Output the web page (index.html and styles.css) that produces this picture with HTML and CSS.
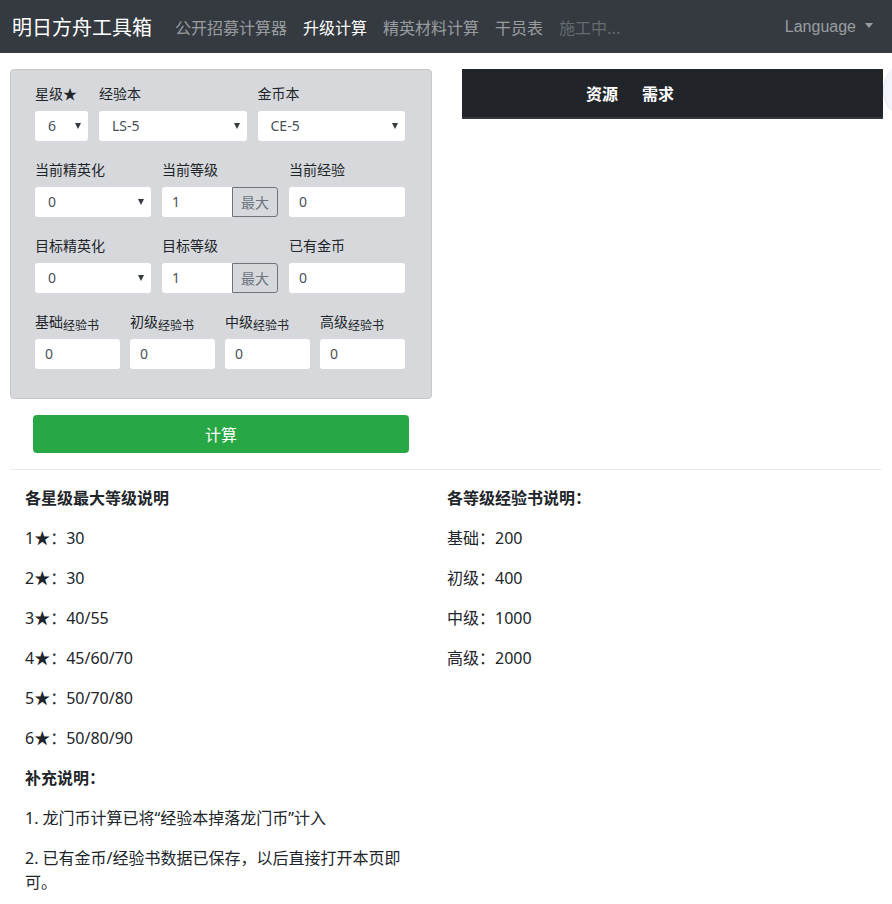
FILE: index.html
```html
<!DOCTYPE html>
<html lang="zh-CN">
<head>
<meta charset="utf-8">
<title>明日方舟工具箱 - 升级计算</title>
<link rel="stylesheet" href="styles.css">
</head>
<body>
<nav class="navbar">
  <a class="brand" href="#">明日方舟工具箱</a>
  <ul class="nav">
    <li><a class="nav-link" href="#">公开招募计算器</a></li>
    <li><a class="nav-link active" href="#">升级计算</a></li>
    <li><a class="nav-link" href="#">精英材料计算</a></li>
    <li><a class="nav-link" href="#">干员表</a></li>
    <li><a class="nav-link disabled" href="#">施工中...</a></li>
  </ul>
  <a class="nav-link lang" href="#">Language<span class="caret"></span></a>
</nav>

<main class="main">
  <div class="top">
    <div class="left">
      <form class="card">
        <div class="frow r1">
          <div class="fg"><label class="lbl">星级★</label><div class="sel"><span>6</span></div></div>
          <div class="fg"><label class="lbl">经验本</label><div class="sel"><span>LS-5</span></div></div>
          <div class="fg"><label class="lbl">金币本</label><div class="sel"><span>CE-5</span></div></div>
        </div>
        <div class="frow r3">
          <div class="fg"><label class="lbl">当前精英化</label><div class="sel"><span>0</span></div></div>
          <div class="fg"><label class="lbl">当前等级</label><div class="igroup"><div class="inp">1</div><button type="button" class="maxbtn">最大</button></div></div>
          <div class="fg"><label class="lbl">当前经验</label><div class="inp">0</div></div>
        </div>
        <div class="frow r3">
          <div class="fg"><label class="lbl">目标精英化</label><div class="sel"><span>0</span></div></div>
          <div class="fg"><label class="lbl">目标等级</label><div class="igroup"><div class="inp">1</div><button type="button" class="maxbtn">最大</button></div></div>
          <div class="fg"><label class="lbl">已有金币</label><div class="inp">0</div></div>
        </div>
        <div class="frow r4">
          <div class="fg"><label class="lbl">基础<small>经验书</small></label><div class="inp">0</div></div>
          <div class="fg"><label class="lbl">初级<small>经验书</small></label><div class="inp">0</div></div>
          <div class="fg"><label class="lbl">中级<small>经验书</small></label><div class="inp">0</div></div>
          <div class="fg"><label class="lbl">高级<small>经验书</small></label><div class="inp">0</div></div>
        </div>
      </form>
      <button type="button" class="calc">计算</button>
    </div>
    <div class="right">
      <table class="res">
        <thead><tr><th class="c1">资源</th><th>需求</th></tr></thead>
      </table>
    </div>
  </div>

  <hr class="sep">

  <div class="notes">
    <div class="ncol left-notes">
      <p class="h">各星级最大等级说明</p>
      <p>1★：30</p>
      <p>2★：30</p>
      <p>3★：40/55</p>
      <p>4★：45/60/70</p>
      <p>5★：50/70/80</p>
      <p>6★：50/80/90</p>
      <p class="h">补充说明：</p>
      <p>1. 龙门币计算已将“经验本掉落龙门币”计入</p>
      <p>2. 已有金币/经验书数据已保存，以后直接打开本页即可。</p>
    </div>
    <div class="ncol right-notes">
      <p class="h">各等级经验书说明：</p>
      <p>基础：200</p>
      <p>初级：400</p>
      <p>中级：1000</p>
      <p>高级：2000</p>
    </div>
  </div>
</main>

<div class="float-wrap"><div class="float-circle"></div></div>
</body>
</html>
```

FILE: styles.css
```css
html, body {
  overflow-x: hidden;
}
body {
  margin: 0;
  font-family: "Noto Sans", "Noto Sans CJK SC", sans-serif;
  font-size: 16px;
  line-height: 24px;
  color: #212529;
  background: #fff;
}

/* navbar */
.navbar {
  height: 53px;
  background: #343a40;
  display: flex;
  align-items: center;
  padding: 0 19px 0 12px;
  box-sizing: border-box;
}
.brand {
  color: #fff;
  text-decoration: none;
  font-size: 20px;
  line-height: 30px;
  margin-right: 15px;
  font-family: "Noto Sans CJK SC", sans-serif;
}
.nav {
  list-style: none;
  margin: 0;
  padding: 0;
  display: flex;
}
.nav-link {
  display: block;
  padding: 0 8px;
  color: rgba(255, 255, 255, 0.5);
  text-decoration: none;
  font-size: 16px;
  line-height: 24px;
  font-family: "Noto Sans CJK SC", sans-serif;
}
.nav-link.active { color: #fff; }
.nav-link.disabled { color: rgba(255, 255, 255, 0.25); }
.lang {
  margin-left: auto;
  padding: 0;
  font-family: "Liberation Sans", "Noto Sans", sans-serif;
}
.caret {
  display: inline-block;
  margin-left: 9px;
  vertical-align: 4px;
  border-top: 5px solid rgba(255, 255, 255, 0.5);
  border-left: 4px solid transparent;
  border-right: 4px solid transparent;
}

/* main */
.main {
  padding: 0 10px;
}
.top {
  display: flex;
  gap: 30px;
  margin-top: 16px;
}
.left {
  width: 422px;
  flex: none;
}
.right {
  width: 421px;
  flex: none;
}

/* card form */
.card {
  margin: 0;
  background: #d6d8db;
  border: 1px solid #c6c8ca;
  border-radius: 4px;
  padding: 13px 26px 29px 24px;
}
.frow {
  display: grid;
  gap: 11px;
  margin-bottom: 18px;
}
.frow:last-child { margin-bottom: 0; }
.r1 { grid-template-columns: 53px 1fr 1fr; }
.r3 { grid-template-columns: 1fr 1fr 1fr; }
.r4 { grid-template-columns: 1fr 1fr 1fr 1fr; gap: 11px 10px; }
.fg { min-width: 0; }
.lbl {
  display: block;
  height: 20px;
  font-family: "Noto Sans CJK SC", sans-serif;
  font-size: 14px;
  line-height: 20px;
  margin-bottom: 8px;
  color: #212529;
  white-space: nowrap;
}
.lbl small {
  font-size: 12px;
  line-height: 0;
  position: relative;
  top: 3px;
}
.sel, .inp {
  height: 30px;
  box-sizing: border-box;
  background: #fff;
  border-radius: 3px;
  font-size: 14px;
  line-height: 30px;
  color: #495057;
  font-family: "Noto Sans", sans-serif;
}
.sel {
  position: relative;
  padding-left: 13px;
}
.sel::after {
  content: "";
  position: absolute;
  right: 7px;
  top: 12px;
  border-top: 6px solid #343a40;
  border-left: 3px solid transparent;
  border-right: 3px solid transparent;
}
.inp {
  padding-left: 10px;
}
.igroup {
  display: flex;
}
.igroup .inp {
  flex: 1;
  border-radius: 3px 0 0 3px;
}
.maxbtn {
  width: 46px;
  height: 30px;
  flex: none;
  margin: 0;
  padding: 0;
  box-sizing: border-box;
  border: 1px solid #6c757d;
  border-radius: 0 3px 3px 0;
  background: transparent;
  color: #6c757d;
  font-family: "Noto Sans CJK SC", sans-serif;
  font-size: 14px;
  line-height: 28px;
}

.calc {
  display: block;
  width: 376px;
  height: 38px;
  margin: 16px 0 0 23px;
  border: none;
  border-radius: 4px;
  background: #28a745;
  color: #fff;
  font-family: "Noto Sans CJK SC", sans-serif;
  font-size: 16px;
  line-height: 38px;
  padding: 0;
}

/* resource table */
.res {
  width: 100%;
  border-collapse: collapse;
  background: #212529;
}
.res th {
  height: 48px;
  padding: 0 12px;
  color: #fff;
  font-family: "Noto Sans CJK SC", sans-serif;
  font-size: 16px;
  font-weight: bold;
  text-align: left;
  border-bottom: 2px solid #32383e;
  width: 1px;
  white-space: nowrap;
}
.res th.c1 { padding-left: 124px; }
.res th:last-child { width: auto; }

.sep {
  margin: 16px 0 0;
  border: 0;
  border-top: 1px solid #e9ecef;
}

/* notes */
.notes {
  display: flex;
  padding-top: 16px;
}
.ncol p {
  margin: 0 0 16px;
  font-family: "Noto Sans", "Noto Sans CJK SC", sans-serif;
  font-size: 16px;
  line-height: 24px;
}
.ncol p.h { font-weight: bold; }
.left-notes {
  width: 384px;
  padding-left: 15px;
  flex: none;
}
.right-notes {
  margin-left: 38px;
}

.float-wrap {
  position: absolute;
  left: 883px;
  top: 58px;
  width: 9px;
  height: 64px;
  overflow: hidden;
}
.float-circle {
  margin-top: 2px;
  width: 58px;
  height: 58px;
  border-radius: 50%;
  background: #f2f5fc;
  border: 1px solid #e2e8f3;
}
```
